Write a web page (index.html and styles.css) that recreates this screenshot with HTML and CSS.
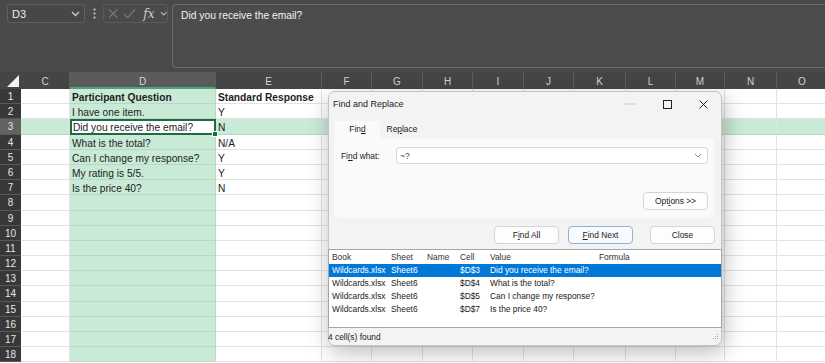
FILE: index.html
```html
<!DOCTYPE html>
<html lang="en">
<head>
  <meta charset="UTF-8" />
  <title>Find and Replace</title>
  <link rel="stylesheet" href="styles.css">
</head>
<body>
  <div class="app">
    <div class="formula-area">
      <div class="name-box">
        <span>D3</span>
        <svg width="9" height="6" viewBox="0 0 9 6"><path d="M1 1l3.5 3.5L8 1" fill="none" stroke="#cfcfcf" stroke-width="1.3"/></svg>
      </div>
      <div class="more">
        <svg width="3" height="11" viewBox="0 0 3 11"><circle cx="1.5" cy="1.5" r="1.1" fill="#cfcfcf"/><circle cx="1.5" cy="5.5" r="1.1" fill="#cfcfcf"/><circle cx="1.5" cy="9.5" r="1.1" fill="#cfcfcf"/></svg>
      </div>
      <div class="fx-group">
        <svg width="11" height="11" viewBox="0 0 11 11"><path d="M1 1l9 9M10 1l-9 9" stroke="#7c7c7c" stroke-width="1.2"/></svg>
        <svg width="14" height="11" viewBox="0 0 14 11"><path d="M1 6l4 4 8-9" fill="none" stroke="#7c7c7c" stroke-width="1.2"/></svg>
        <span class="fx">fx</span>
        <svg width="8" height="5" viewBox="0 0 8 5"><path d="M1 1l3 3 3-3" fill="none" stroke="#bdbdbd" stroke-width="1.1"/></svg>
      </div>
      <div class="formula-box">Did you receive the email?</div>
    </div>

    <div class="sheet" id="sheet"></div>

    <div class="dialog">
      <div class="dlg-title">
        <span>Find and Replace</span>
        <div class="win-btns">
          <svg width="11" height="2" viewBox="0 0 11 2"><path d="M0 1h11" stroke="#c4c4c4" stroke-width="1"/></svg>
          <svg width="9" height="9" viewBox="0 0 9 9"><rect x="0.5" y="0.5" width="8" height="8" fill="none" stroke="#222" stroke-width="1"/></svg>
          <svg width="9" height="9" viewBox="0 0 9 9"><path d="M0.5 0.5l8 8M8.5 0.5l-8 8" stroke="#222" stroke-width="1"/></svg>
        </div>
      </div>
      <div class="tabs">
        <div class="tab active">Fin<u>d</u></div>
        <div class="tab">Re<u>p</u>lace</div>
      </div>
      <div class="panel">
        <div class="find-row">
          <label>Fi<u>n</u>d what:</label>
          <div class="combo">
            <span>~?</span>
            <svg width="8" height="5" viewBox="0 0 8 5"><path d="M1 1l3 3 3-3" fill="none" stroke="#888" stroke-width="1"/></svg>
          </div>
        </div>
        <div class="options-row">
          <button class="btn">Opt<u>i</u>ons &gt;&gt;</button>
        </div>
      </div>
      <div class="actions">
        <button class="btn">F<u>i</u>nd All</button>
        <button class="btn focus"><u>F</u>ind Next</button>
        <button class="btn close-btn">Close</button>
      </div>
      <div class="results">
        <div class="res-row head">
          <span>Book</span><span>Sheet</span><span>Name</span><span>Cell</span><span>Value</span><span>Formula</span>
        </div>
        <div class="res-row picked">
          <span>Wildcards.xlsx</span><span>Sheet6</span><span></span><span>$D$3</span><span>Did you receive the email?</span><span></span>
        </div>
        <div class="res-row">
          <span>Wildcards.xlsx</span><span>Sheet6</span><span></span><span>$D$4</span><span>What is the total?</span><span></span>
        </div>
        <div class="res-row">
          <span>Wildcards.xlsx</span><span>Sheet6</span><span></span><span>$D$5</span><span>Can I change my response?</span><span></span>
        </div>
        <div class="res-row">
          <span>Wildcards.xlsx</span><span>Sheet6</span><span></span><span>$D$7</span><span>Is the price 40?</span><span></span>
        </div>
      </div>
      <div class="status">
        <span>4 cell(s) found</span>
        <svg width="7" height="7" viewBox="0 0 7 7"><g fill="#a8a8a8"><rect x="5" y="1" width="1" height="1"/><rect x="3" y="3" width="1" height="1"/><rect x="5" y="3" width="1" height="1"/><rect x="1" y="5" width="1" height="1"/><rect x="3" y="5" width="1" height="1"/><rect x="5" y="5" width="1" height="1"/></g></svg>
      </div>
    </div>
  </div>

  <script>
    const sheet = document.getElementById('sheet');
    const cols = ['C', 'D', 'E', 'F', 'G', 'H', 'I', 'J', 'K', 'L', 'M', 'N', 'O'];
    const data = {
      1: ['Participant Question', 'Standard Response'],
      2: ['I have one item.', 'Y'],
      3: ['Did you receive the email?', 'N'],
      4: ['What is the total?', 'N/A'],
      5: ['Can I change my response?', 'Y'],
      6: ['My rating is 5/5.', 'Y'],
      7: ['Is the price 40?', 'N']
    };

    let html = '<div class="corner"></div>';
    cols.forEach(c => {
      html += `<div class="col-head${c === 'D' ? ' sel' : ''}">${c}</div>`;
    });

    for (let r = 1; r <= 18; r++) {
      html += `<div class="row-head${r === 3 ? ' sel' : ''}">${r}</div>`;
      cols.forEach(c => {
        let cls = 'cell';
        let text = '';
        if (c === 'D') cls += ' sel-col';
        if (r === 3) cls += ' sel-row';
        if (r === 3 && c === 'D') cls += ' active';
        if (r === 1) cls += ' bold';
        if (data[r] && c === 'D') text = data[r][0];
        if (data[r] && c === 'E') text = data[r][1];
        html += `<div class="${cls}">${text}</div>`;
      });
    }
    sheet.innerHTML = html;
  </script>
</body>
</html>
```

FILE: styles.css
```css
body {
  margin: 0;
  background-color: #fff;
  font-family: 'Liberation Sans', Arial, sans-serif;
  overflow: hidden;
}

.app {
  position: relative;
  width: 825px;
  height: 363px;
  overflow: hidden;
}

/* formula bar */

.formula-area {
  height: 72px;
  box-sizing: border-box;
  padding: 4px 0 0 7px;
  background-color: #4a4a4a;
  display: flex;
  align-items: flex-start;
}

.name-box {
  width: 78px;
  height: 19px;
  box-sizing: border-box;
  border: 1px solid #5f5f5f;
  border-radius: 3px;
  background-color: #474747;
  color: #ededed;
  font-size: 11px;
  display: flex;
  align-items: center;
  justify-content: space-between;
  padding: 0 4px 0 4px;
}

.more {
  width: 18px;
  height: 19px;
  display: flex;
  align-items: center;
  justify-content: center;
}

.fx-group {
  width: 65px;
  height: 19px;
  box-sizing: border-box;
  border: 1px solid #5a5a5a;
  border-radius: 3px;
  display: flex;
  align-items: center;
  gap: 5px;
  padding-left: 4px;
}

.fx {
  font-family: 'DejaVu Serif', 'Liberation Serif', serif;
  font-style: italic;
  font-size: 12px;
  color: #cfcfcf;
  margin-left: 2px;
}

.formula-box {
  flex: 1;
  height: 64px;
  margin-left: 4px;
  margin-right: -10px;
  box-sizing: border-box;
  border: 1px solid #6c6c6c;
  border-radius: 4px;
  background-color: #4c4c4c;
  color: #f2f2f2;
  font-size: 10.3px;
  padding: 5px 8px;
}

/* sheet grid */

.sheet {
  display: grid;
  grid-template-columns: 21px 49px 146px 106px 50px 51px 50px 51px 50px 52px 50px 49px 52px 51px;
  grid-template-rows: 17px;
  grid-auto-rows: 15.2px;
}

.corner {
  background-color: #454545;
  position: relative;
}

.corner::after {
  content: '';
  position: absolute;
  right: 2px;
  bottom: 2px;
  border-left: 12px solid transparent;
  border-bottom: 12px solid #f2f2f2;
}

.col-head {
  background-color: #454545;
  color: #d2d2d2;
  font-size: 10px;
  line-height: 20px;
  text-align: center;
  box-sizing: border-box;
  border-right: 1px solid #5c5c5c;
}

.col-head.sel {
  background-color: #5a5a5a;
  border-bottom: 2px solid #4aa574;
  line-height: 19px;
}

.row-head {
  background-color: #383838;
  color: #e6e6e6;
  font-size: 10px;
  line-height: 16px;
  text-align: center;
  box-sizing: border-box;
  border-bottom: 1px solid #585858;
}

.row-head.sel {
  background-color: #626262;
}

.cell {
  box-sizing: border-box;
  border-right: 1px solid #e2e2e2;
  border-bottom: 1px solid #e2e2e2;
  padding: 0 2px;
  font-size: 10.2px;
  line-height: 17px;
  color: #1d1d1d;
  white-space: nowrap;
}

.cell.bold {
  font-weight: bold;
}

.cell.sel-col,
.cell.sel-row {
  background-color: #c8ead6;
  border-bottom-color: #b6d9c4;
}

.cell.sel-col {
  border-right-color: #b6d9c4;
}

.cell.active {
  background-color: #fff;
  border: 2px solid #1e6b41;
  line-height: 14px;
  padding-left: 1px;
  position: relative;
}

.cell.active::after {
  content: '';
  position: absolute;
  right: -4px;
  bottom: -4px;
  width: 4px;
  height: 4px;
  background-color: #1e6b41;
  border: 1px solid #fff;
}

/* dialog */

.dialog {
  position: absolute;
  left: 328px;
  top: 91px;
  width: 394px;
  height: 255px;
  box-sizing: border-box;
  border: 1px solid #c4c4c4;
  border-radius: 7px;
  background-color: #f3f3f3;
  box-shadow: 2px 6px 22px rgba(0, 0, 0, 0.28);
  font-size: 8.4px;
  color: #1b1b1b;
  display: flex;
  flex-direction: column;
}

.dlg-title {
  height: 24px;
  display: flex;
  align-items: center;
  justify-content: space-between;
  padding: 0 13px 0 4px;
  font-size: 9px;
}

.win-btns {
  display: flex;
  align-items: center;
  gap: 27px;
}

.tabs {
  display: flex;
  margin: 5px 0 0 6px;
  height: 17px;
}

.tab {
  width: 45px;
  text-align: center;
  line-height: 16px;
}

.tab.active {
  background-color: #fafafa;
}

.tab + .tab {
  width: 44px;
}

.panel {
  height: 80px;
  margin: 0 7px 0 5px;
  background-color: #fafafa;
  border-radius: 0 3px 3px 3px;
  padding: 9px 6px 0 7px;
  box-sizing: border-box;
  display: flex;
  flex-direction: column;
}

.find-row {
  display: flex;
  align-items: center;
}

.find-row label {
  width: 55px;
}

.combo {
  flex: 1;
  height: 17px;
  box-sizing: border-box;
  background-color: #fff;
  border: 1px solid #d6d6d6;
  border-radius: 3px;
  display: flex;
  align-items: center;
  justify-content: space-between;
  padding: 0 5px 0 3px;
  color: #444;
}

.options-row {
  display: flex;
  justify-content: flex-end;
  margin-top: 28px;
}

.btn {
  width: 65px;
  height: 18px;
  padding: 0;
  font-family: inherit;
  font-size: 8.4px;
  color: #1b1b1b;
  background-color: #fdfdfd;
  border: 1px solid #d5d5d5;
  border-radius: 4px;
}

.btn.focus {
  border-color: #8fb1d6;
  background-color: #f8fafd;
}

.actions {
  display: flex;
  justify-content: flex-end;
  gap: 9px;
  padding-right: 6px;
  margin-top: 8px;
}

.actions .close-btn {
  margin-left: 8px;
}

.results {
  margin-top: 5px;
  height: 79px;
  box-sizing: border-box;
  background-color: #fff;
  border: 1px solid #a5a5a5;
  padding-top: 1px;
  margin-right: -1px;
  margin-left: -1px;
}

.res-row {
  display: grid;
  grid-template-columns: 59px 36px 33px 30px 109px 1fr;
  height: 13px;
  line-height: 13px;
  padding-left: 3px;
  white-space: nowrap;
}

.res-row.head {
  color: #333;
}

.res-row.picked {
  background-color: #0078d7;
  color: #fff;
}

.status {
  flex: 1;
  display: flex;
  align-items: center;
  justify-content: space-between;
  padding: 0 2px 0 0;
  margin-left: -1px;
}
```
